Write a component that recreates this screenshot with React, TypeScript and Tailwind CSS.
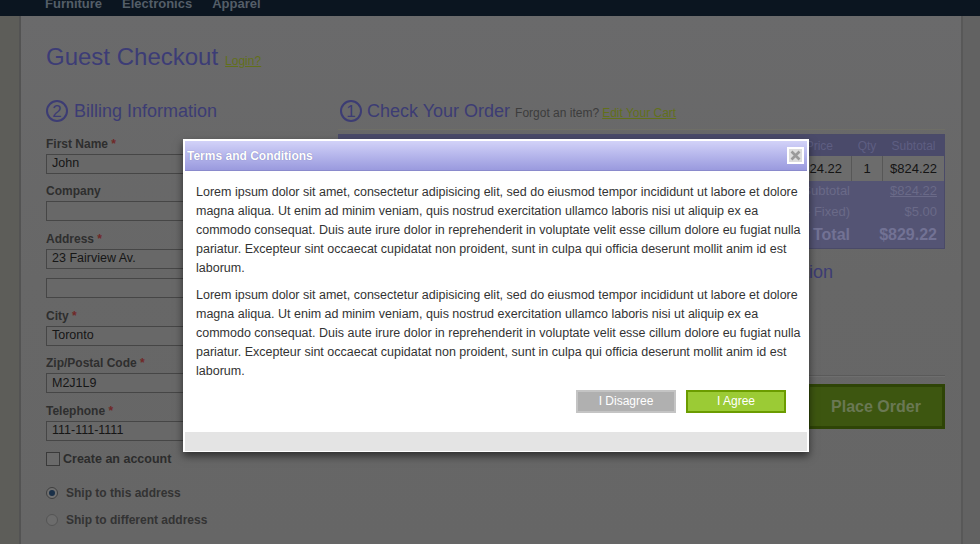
import React from "react";

const FONT = { fontFamily: '"Liberation Sans", Arial, sans-serif' };

function Circle({ n }: { n: string }) {
  return (
    <span className="flex h-[22px] w-[22px] shrink-0 items-center justify-center rounded-full border-2 border-[#3c3c74] text-[17px] leading-none text-[#3c3c74]">
      {n}
    </span>
  );
}

function Field({ label, value, req, extra }: { label: string; value: string; req?: boolean; extra?: boolean }) {
  return (
    <div className="mb-[10.5px]">
      <div className="text-[12px] font-bold leading-[15px] text-[#2e2e2e]">
        {label}
        {req && <span className="text-[#702828]"> *</span>}
      </div>
      <div className="mt-[2px] flex h-[20px] items-center border border-[#464646] bg-[#686868] px-[5px] text-[12.5px] text-[#161616]">
        {value}
      </div>
      {extra && <div className="mt-[9.5px] h-[20px] border border-[#464646] bg-[#686868]" />}
    </div>
  );
}

const P = [
  "Lorem ipsum dolor sit amet, consectetur adipisicing elit, sed do eiusmod tempor incididunt ut labore et dolore",
  "magna aliqua. Ut enim ad minim veniam, quis nostrud exercitation ullamco laboris nisi ut aliquip ex ea",
  "commodo consequat. Duis aute irure dolor in reprehenderit in voluptate velit esse cillum dolore eu fugiat nulla",
  "pariatur. Excepteur sint occaecat cupidatat non proident, sunt in culpa qui officia deserunt mollit anim id est",
  "laborum.",
];

export default function App() {
  return (
    <div className="relative h-[544px] w-[980px] overflow-hidden bg-[#666666]" style={FONT}>
      {/* top nav */}
      <div className="h-[16px] overflow-hidden bg-[#0b1520]">
        <div className="-mt-[3px] flex gap-[20px] pl-[45px] text-[13px] font-bold leading-[13px] text-[#545e68]">
          <span>Furniture</span>
          <span>Electronics</span>
          <span>Apparel</span>
        </div>
      </div>

      <div className="flex h-[528px]">
        <div className="w-[19px] bg-[#5d5d59]" />
        <div className="w-[2px] bg-[#535353]" />
        {/* main */}
        <div className="flex-1 bg-gradient-to-b from-[#6a6a6b] via-[#676767] to-[#666666] pl-[25px] pr-[16px]">
          <div className="mt-[27px] flex items-baseline gap-[7px]">
            <span className="text-[24px] leading-[28px] text-[#3c3c76]">Guest Checkout</span>
            <span className="text-[12px] text-[#62701a] underline">Login?</span>
          </div>

          <div className="mt-[29px] flex gap-[22px]">
            {/* left column */}
            <div className="w-[270px]">
              <div className="flex h-[22px] items-center gap-[6px]">
                <Circle n="2" />
                <span className="text-[18px] text-[#3c3c74]">Billing Information</span>
              </div>
              <div className="mt-[14.5px]">
                <Field label="First Name" value="John" req />
                <Field label="Company" value="" />
                <Field label="Address" value="23 Fairview Av." req extra />
                <Field label="City" value="Toronto" req />
                <Field label="Zip/Postal Code" value="M2J1L9" req />
                <Field label="Telephone" value="111-111-1111" req />
              </div>
              <div className="-mt-[1.5px] flex items-center gap-[3px]">
                <span className="h-[14px] w-[14px] border border-[#3a3a3a] bg-[#6a6a6a]" />
                <span className="text-[12.5px] font-bold text-[#2c2c2c]">Create an account</span>
              </div>
              <div className="mt-[15.5px] flex items-center gap-[8px]">
                <span className="flex h-[12px] w-[12px] items-center justify-center rounded-full border border-[#3f3f3f] bg-[#707070]">
                  <span className="h-[6px] w-[6px] rounded-full bg-[#1a3048]" />
                </span>
                <span className="text-[12px] font-bold text-[#333333]">Ship to this address</span>
              </div>
              <div className="mt-[9px] flex items-center gap-[8px]">
                <span className="h-[12px] w-[12px] rounded-full border border-[#555555] bg-[#6c6c6c]" />
                <span className="text-[12px] font-bold text-[#333333]">Ship to different address</span>
              </div>
            </div>

            {/* right column */}
            <div className="w-[607px]">
              <div className="flex h-[22px] items-center pl-[2px]">
                <Circle n="1" />
                <span className="ml-[5px] text-[18px] text-[#3c3c74]">Check Your Order</span>
                <span className="ml-[5px] mt-[3px] text-[12px] text-[#3c3c3c]">Forgot an item?</span>
                <span className="ml-[3px] mt-[3px] text-[12px] text-[#62701a] underline">Edit Your Cart</span>
              </div>
              <div className="mt-[7px] h-px bg-[#6e6e66]" />
              <div className="mt-[4px] border border-[#4a4a68] bg-[#545474] text-[12px]">
                <div className="grid h-[21px] grid-cols-[1fr_80px_32px_61px] items-center bg-[#4a4a6a] text-[#5e5e82]">
                  <span />
                  <span className="pr-[18px] text-right">Price</span>
                  <span className="text-center">Qty</span>
                  <span className="text-center">Subtotal</span>
                </div>
                <div className="grid h-[25px] grid-cols-[1fr_80px_32px_61px] items-center bg-[#6c6c6c] text-[13px] text-[#141414]">
                  <span />
                  <span className="flex h-full items-center justify-end pr-[9px]">$824.22</span>
                  <span className="flex h-full items-center justify-center border-x border-[#575757]">1</span>
                  <span className="text-center">$824.22</span>
                </div>
                <div className="grid grid-cols-[1fr_94px] text-[13px] text-[#6a6a88]">
                  <span className="h-[20px] text-right leading-[20px]">Subtotal</span>
                  <span className="h-[20px] pr-[7px] text-right leading-[20px] underline">$824.22</span>
                  <span className="h-[21px] text-right leading-[21px]">(- Fixed)</span>
                  <span className="h-[21px] pr-[7px] text-right leading-[21px]">$5.00</span>
                  <span className="h-[26px] text-right text-[16px] font-bold leading-[26px] text-[#727294]">Total</span>
                  <span className="h-[26px] pr-[7px] text-right text-[16px] font-bold leading-[26px] text-[#727294]">$829.22</span>
                </div>
              </div>
              <div className="mt-[12px] grid grid-cols-[300px_1fr]">
                <div className="flex h-[22px] items-center gap-[5px] pl-[2px]">
                  <Circle n="3" />
                  <span className="text-[18px] text-[#3c3c74]">Shipping Method</span>
                </div>
                <div className="flex h-[22px] items-center gap-[5px] pl-[2px]">
                  <Circle n="4" />
                  <span className="text-[18px] text-[#3c3c74]">Payment Information</span>
                </div>
              </div>
              <div className="mt-[92px] h-px bg-[#5a5a5a]" />
              <div className="h-px bg-[#6e6e6e]" />
              <div className="mt-[7px] flex justify-end">
                <div className="flex h-[45px] w-[138px] items-center justify-center border-[3px] border-[#2e4406] bg-[#3d5610] text-[16px] font-bold text-[#6a7854]">
                  Place Order
                </div>
              </div>
            </div>
          </div>
        </div>
        <div className="w-[2px] bg-[#585858]" />
        <div className="flex-1 bg-[#626262]" />
      </div>

      {/* modal */}
      <div className="absolute left-[183px] top-[139px] flex h-[313px] w-[626px] flex-col bg-white p-[2px] pb-[1px] shadow-[0_4px_8px_rgba(0,0,0,0.55)]">
        <div className="flex h-[30px] items-center justify-between border-b border-[#8a8acc] bg-gradient-to-b from-[#d2d2f8] to-[#9a9ade] pl-[2px] pr-[3px]">
          <span className="text-[12px] font-bold text-white [text-shadow:0_0_1px_rgba(80,80,140,0.6)]">Terms and Conditions</span>
          <span className="flex h-[17px] w-[17px] items-center justify-center border-2 border-white bg-[#dcdcdc]">
            <svg width="11" height="11" viewBox="0 0 11 11">
              <path d="M1.5 1.5 L9.5 9.5 M9.5 1.5 L1.5 9.5" stroke="#9a9a9a" strokeWidth="2.6" />
            </svg>
          </span>
        </div>
        <div className="flex-1 bg-white pl-[11px] pr-[21px] pt-[12px] text-[12.5px] leading-[19px] text-[#333333]">
          {[0, 1].map((k) => (
            <div key={k} className={k === 1 ? "mt-[8px]" : ""}>
              {P.map((l, i) => (
                <div key={i} className="whitespace-nowrap">
                  {l}
                </div>
              ))}
            </div>
          ))}
          <div className="mt-[9px] flex justify-end gap-[10px]">
            <span className="flex h-[23px] w-[100px] items-center justify-center border-2 border-[#c4c4c4] bg-[#b0b0b0] text-[12px] text-white">
              I Disagree
            </span>
            <span className="flex h-[23px] w-[100px] items-center justify-center border-2 border-[#6b9c00] bg-[#9bcb35] text-[12px] text-white">
              I Agree
            </span>
          </div>
        </div>
        <div className="h-[19px] bg-[#e4e4e4]" />
      </div>
    </div>
  );
}
